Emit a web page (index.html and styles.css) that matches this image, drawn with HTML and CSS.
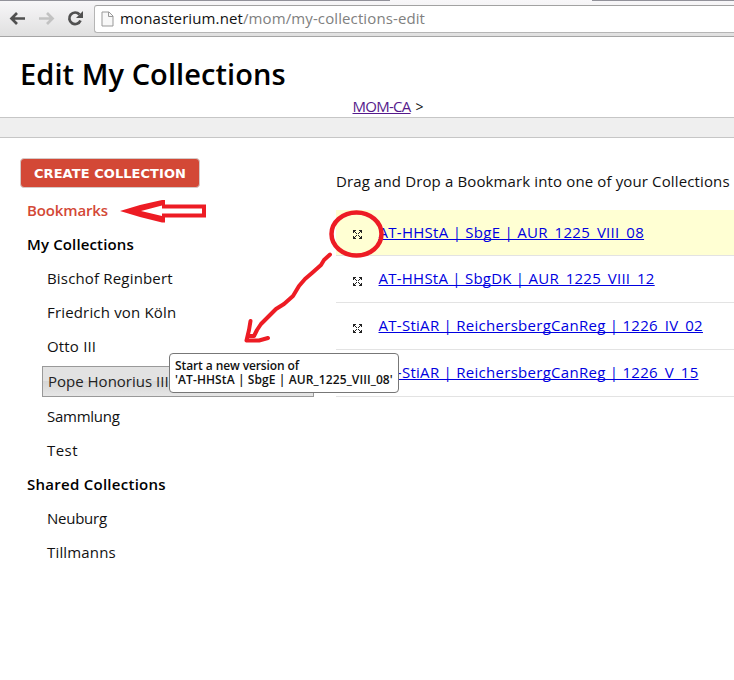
FILE: index.html
```html
<!DOCTYPE html>
<html lang="en">
<head>
<meta charset="utf-8">
<title>Edit My Collections</title>
<link rel="stylesheet" href="styles.css">
</head>
<body>
<svg class="defs" width="0" height="0">
  <symbol id="move" viewBox="0 0 9 9">
    <path d="M0 0h3v1H1v2H0zM6 0h3v3H8V1H6zM0 6h1v2h2v1H0zM8 6h1v3H6V8h2zM1 1h1v1H1zM2 2h1v1H2zM3 3h1v1H3zM7 1h1v1H7zM6 2h1v1H6zM5 3h1v1H5zM3 5h1v1H3zM2 6h1v1H2zM1 7h1v1H1zM5 5h1v1H5zM6 6h1v1H6zM7 7h1v1H7z"/>
  </symbol>
</svg>
<div class="browser">
  <div class="tabs"><i></i><i></i></div>
  <div class="toolbar">
    <svg class="nav" width="94" height="30" viewBox="0 4 94 30" fill="none">
      <path d="M25 18.5H12M17 13l-5.5 5.5L17 24" stroke="#505050" stroke-width="2.7"/>
      <path d="M39 18.5h13M47 13l5.500 5.500L47 24" stroke="#c2c2c2" stroke-width="2.700"/>
      <path d="M79.500 14.500A5.800 5.800 0 1 0 80.500 20.500" stroke="#505050" stroke-width="2.700"/>
      <path d="M83 11v7h-7z" fill="#505050"/>
    </svg>
    <div class="address">
      <svg width="13" height="16" viewBox="0 0 13 16"><path d="M1 1h7l4 4v10H1z" fill="#f8f8f8" stroke="#999"/><path d="M7.500 1v4.500H12" fill="none" stroke="#999"/></svg>
      <span class="url">monasterium.net<span>/mom/my-collections-edit</span></span>
    </div>
  </div>
</div>
<header>
  <h1>Edit My Collections</h1>
  <div class="crumbs"><a href="#">MOM-CA</a> <span>&gt;</span></div>
</header>
<div class="band"></div>
<main>
  <nav class="side">
    <button>CREATE COLLECTION</button>
    <div class="head active">Bookmarks</div>
    <div class="head my">My Collections</div>
    <div class="item">Bischof Reginbert</div>
    <div class="item">Friedrich von Köln</div>
    <div class="item">Otto III</div>
    <div class="target">Pope Honorius III</div>
    <div class="item tight">Sammlung</div>
    <div class="item wide">Test</div>
    <div class="head shared">Shared Collections</div>
    <div class="item tight">Neuburg</div>
    <div class="item">Tillmanns</div>
  </nav>
  <section class="content">
    <p>Drag and Drop a Bookmark into one of your Collections</p>
    <div class="row hot"><svg><use href="#move"/></svg><a href="#">AT-HHStA | SbgE | AUR_1225_VIII_08</a></div>
    <div class="row second"><svg><use href="#move"/></svg><a href="#">AT-HHStA | SbgDK | AUR_1225_VIII_12</a></div>
    <div class="row"><svg><use href="#move"/></svg><a href="#">AT-StiAR | ReichersbergCanReg | 1226_IV_02</a></div>
    <div class="row"><svg><use href="#move"/></svg><a href="#">AT-StiAR | ReichersbergCanReg | 1226_V_15</a></div>
  </section>
</main>
<div class="tip">Start a new version of<br><span>'AT-HHStA | SbgE | AUR_1225_VIII_08'</span></div>
<svg class="marks" width="734" height="680" viewBox="0 0 734 680" fill="none" stroke="#ed1c24" stroke-width="4" stroke-linejoin="round" stroke-linecap="round">
  <path d="M120 211l20-6 22-5h3v4.500h41v13h-41v5h-3l-22-5.500zM141 211l21 5v-2.500h40v-5h-40v-3z" fill="#ed1c24" stroke="none" fill-rule="evenodd"/>
  <ellipse cx="356.500" cy="234" rx="25" ry="21.500" stroke-width="4.500"/>
  <path d="M330 254.500L324 260 321 265 312 273 305 279 299 286 293 296 284 304 276 309 268 317 261 324 257 330 254 336H249.500M250.500 321L249 330 246.500 340.500 259 340.500 268 338"/>
</svg>
</body>
</html>
```
FILE: styles.css
```css
* { box-sizing: border-box; }
body {
  margin: 0;
  height: 680px;
  position: relative;
  overflow: hidden;
  background: #fff;
  color: #111;
  font: 15px "Trebuchet MS", "Open Sans", sans-serif;
}
.defs { position: absolute; }
.browser {
  height: 37px;
  border-bottom: 1px solid #a5a5a5;
  background: linear-gradient(#f8f7f9, #e0e0e0);
}
.tabs { display: flex; justify-content: space-between; height: 1px; }
.tabs i { width: 390px; background: #92929a; }
.tabs i + i { width: 142px; }
.toolbar { display: flex; padding-top: 3px; }
.nav { flex: none; }
.address {
  flex: 1;
  display: flex;
  align-items: center;
  height: 28px;
  margin-top: 1px;
  padding-left: 6px;
  border: 1px solid #b5b5b5;
  border-top-color: #a2a2a2;
  border-right: 0;
  border-radius: 3px 0 0 3px;
  background: #fff;
}
.url { margin: -2px 0 0 6px; letter-spacing: .11px; color: #111; }
.url span { color: #808080; }
header { height: 80px; padding: 17px 0 0 20px; }
h1 { margin: 0 0 1px; font-size: 29px; line-height: 40px; font-weight: 600; color: #000; letter-spacing: .07px; }
.crumbs { padding-left: 332.500px; line-height: 22px; }
.crumbs a { color: #551a8b; letter-spacing: -.73px; }
.crumbs span { margin-left: 1px; font-size: 14px; }
a { color: #0000e0; text-decoration: underline; text-decoration-skip-ink: none; text-underline-offset: 1px; text-decoration-thickness: 1px; }
.band { height: 21px; background: #efefef; border: 1px solid #c6c6c6; border-width: 1px 0; }
main { display: flex; padding-top: 20px; }
.side { width: 336px; padding-left: 20px; }
button {
  display: block;
  width: 180px;
  height: 30px;
  margin-bottom: 5px;
  padding: 1px 0 0;
  border: 1px solid #d5c9c7;
  border-radius: 4px;
  background: #d34836;
  color: #fff;
  font: bold 13px/27px Verdana, "DejaVu Sans", sans-serif;
  letter-spacing: .06px;
}
.head { height: 34px; line-height: 34px; padding-left: 7px; font-weight: 600; color: #000; letter-spacing: .14px; }
.active { color: #d34836; letter-spacing: -.13px; }
.shared { letter-spacing: .27px; }
.item { height: 34px; line-height: 34px; padding-left: 27px; letter-spacing: .17px; }
.tight { letter-spacing: -.25px; }
.wide { letter-spacing: .45px; }
.target {
  width: 272px;
  height: 31px;
  margin: 3px 0 2px 22px;
  padding-left: 5px;
  border: 1px solid #999;
  background: linear-gradient(#e2e2e2 0 50%, #d6d6d6 50%, #e6e6e6);
  color: #222;
  line-height: 29px;
}
.content { flex: 1; white-space: nowrap; }
.content p { margin: 0; height: 52px; line-height: 46px; letter-spacing: .13px; }
.row { display: flex; height: 47px; line-height: 45px; border-bottom: 1px solid #e3e3e3; }
.row svg { width: 9px; height: 9px; margin: 21px 17px 0; flex: none; fill: #222; }
.row a { margin-left: -.5px; letter-spacing: .28px; }
.second a { letter-spacing: .24px; }
.hot { height: 46px; background: #ffffd3; }
.hot svg { margin-top: 20px; }
.tip {
  position: absolute;
  left: 169px;
  top: 353px;
  width: 230px;
  height: 40px;
  padding: 5px 0 0 5px;
  border: 1px solid #777;
  border-radius: 4px;
  background: #fff;
  color: #111;
  font-size: 12px;
  line-height: 14px;
  font-weight: 600;
  letter-spacing: -.1px;
  white-space: nowrap;
}
.tip span { letter-spacing: .1px; }
.marks { position: absolute; left: 0; top: 0; pointer-events: none; }
```
